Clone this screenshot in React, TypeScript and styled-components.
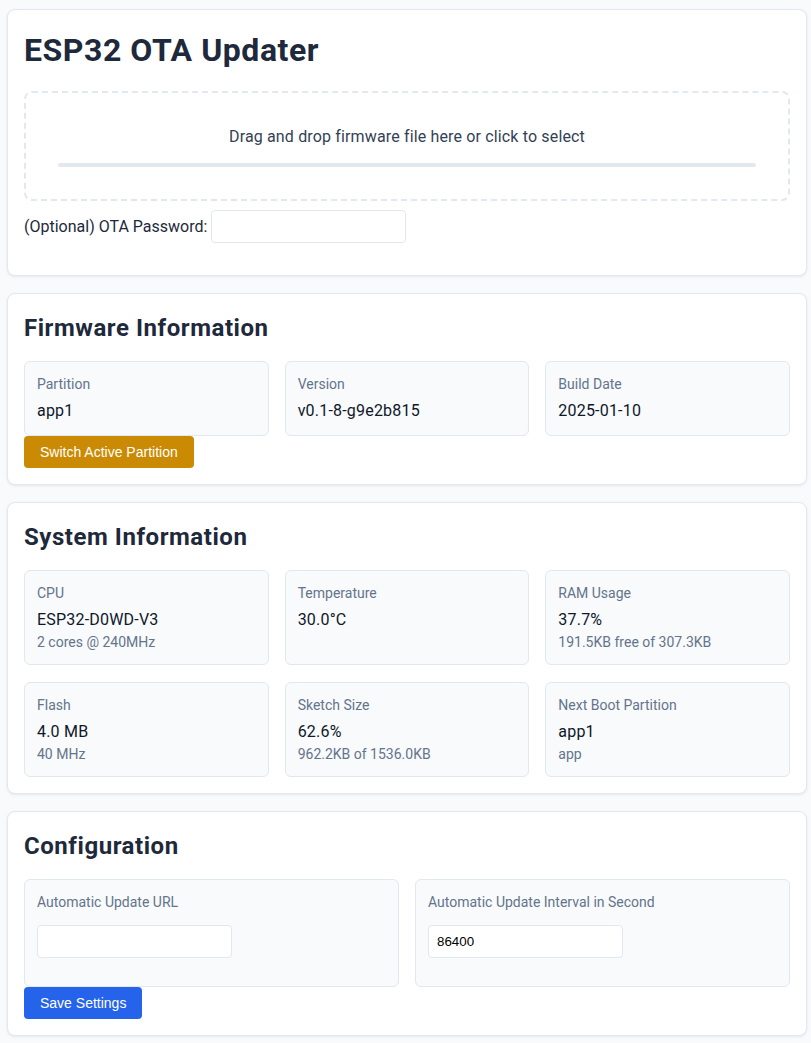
import React from "react";
import styled, { createGlobalStyle } from "styled-components";

const GlobalStyle = createGlobalStyle`
  html, body {
    margin: 0;
    padding: 0;
    background: #f8fafc;
  }
  body {
    font-family: Roboto, "Noto Sans", sans-serif;
    color: #1e293b;
  }
  * { box-sizing: border-box; }
`;

const Page = styled.main`
  padding: 9px 4px 16px 7px;
`;

const Card = styled.section`
  background: #ffffff;
  border: 1px solid #e2e8f0;
  border-radius: 8px;
  box-shadow: 0 1px 3px rgba(15, 23, 42, 0.08);
  padding: 16px;
  margin-bottom: 17px;
`;

const Title = styled.h1`
  margin: 0 0 17px;
  font-size: 32px;
  line-height: 48px;
  font-weight: 700;
  letter-spacing: 0.55px;
  color: #1e293b;
`;

const SectionTitle = styled.h2`
  margin: 0 0 15px;
  font-size: 24px;
  line-height: 36px;
  font-weight: 700;
  letter-spacing: 0.55px;
  color: #1e293b;
`;

const DropZone = styled.div`
  border: 2px dashed #e2e8f0;
  border-radius: 8px;
  padding: 32px;
  text-align: center;
  cursor: pointer;
`;

const DropText = styled.div`
  font-size: 16px;
  line-height: 24px;
  letter-spacing: 0.15px;
  color: #334155;
`;

const Progress = styled.div`
  margin-top: 14px;
  height: 4px;
  border-radius: 2px;
  background: #e2e8f0;
`;

const PasswordRow = styled.div`
  display: flex;
  align-items: center;
  gap: 4px;
  margin: 9px 0 16px;
  font-size: 16px;
  color: #1e293b;
`;

const TextInput = styled.input`
  width: 195px;
  height: 33px;
  padding: 8px;
  border: 1px solid #e2e8f0;
  border-radius: 4px;
  background: #ffffff;
  font-family: "Liberation Sans", Arial, sans-serif;
  font-size: 13.33px;
  color: #000;
  outline: none;
`;

const Grid = styled.div<{ $cols: number }>`
  display: grid;
  grid-template-columns: repeat(${(p) => p.$cols}, 1fr);
  column-gap: 16px;
  row-gap: 17px;
`;

const InfoBox = styled.div`
  background: #f8fafc;
  border: 1px solid #e2e8f0;
  border-radius: 6px;
  padding: 12px;
`;

const InfoLabel = styled.div`
  font-size: 14px;
  line-height: 21px;
  color: #64748b;
`;

const InfoValue = styled.div`
  margin-top: 4px;
  font-size: 16px;
  line-height: 24px;
  font-weight: 400;
  letter-spacing: 0.2px;
  color: #0f172a;
`;

const InfoSub = styled.div`
  font-size: 14px;
  line-height: 20px;
  color: #64748b;
`;

const ConfigInput = styled(TextInput)`
  display: block;
  margin: 12px 0 16px;
  height: 33px;
`;

const ActionButton = styled.button<{ $tone: "warn" | "primary" }>`
  display: inline-block;
  padding: 8px 16px;
  border: none;
  border-radius: 4px;
  background: ${(p) => (p.$tone === "warn" ? "#ca8a04" : "#2563eb")};
  color: #ffffff;
  font-family: "Liberation Sans", Arial, sans-serif;
  font-size: 14px;
  line-height: 16px;
  cursor: pointer;
`;

type Info = { label: string; value: string; sub?: string };

const firmware: Info[] = [
  { label: "Partition", value: "app1" },
  { label: "Version", value: "v0.1-8-g9e2b815" },
  { label: "Build Date", value: "2025-01-10" },
];

const system: Info[] = [
  { label: "CPU", value: "ESP32-D0WD-V3", sub: "2 cores @ 240MHz" },
  { label: "Temperature", value: "30.0°C", sub: "\u00a0" },
  { label: "RAM Usage", value: "37.7%", sub: "191.5KB free of 307.3KB" },
  { label: "Flash", value: "4.0 MB", sub: "40 MHz" },
  { label: "Sketch Size", value: "62.6%", sub: "962.2KB of 1536.0KB" },
  { label: "Next Boot Partition", value: "app1", sub: "app" },
];

const InfoCard: React.FC<Info> = ({ label, value, sub }) => (
  <InfoBox>
    <InfoLabel>{label}</InfoLabel>
    <InfoValue>{value}</InfoValue>
    {sub !== undefined && <InfoSub>{sub}</InfoSub>}
  </InfoBox>
);

export default function App() {
  return (
    <>
      <GlobalStyle />
      <Page>
        <Card>
          <Title>ESP32 OTA Updater</Title>
          <DropZone>
            <DropText>Drag and drop firmware file here or click to select</DropText>
            <Progress />
          </DropZone>
          <PasswordRow>
            <span>(Optional) OTA Password:</span>
            <TextInput type="password" />
          </PasswordRow>
        </Card>

        <Card>
          <SectionTitle>Firmware Information</SectionTitle>
          <Grid $cols={3}>
            {firmware.map((f) => (
              <InfoCard key={f.label} {...f} />
            ))}
          </Grid>
          <ActionButton $tone="warn">Switch Active Partition</ActionButton>
        </Card>

        <Card>
          <SectionTitle>System Information</SectionTitle>
          <Grid $cols={3}>
            {system.map((s) => (
              <InfoCard key={s.label} {...s} />
            ))}
          </Grid>
        </Card>

        <Card>
          <SectionTitle>Configuration</SectionTitle>
          <Grid $cols={2}>
            <InfoBox>
              <InfoLabel>Automatic Update URL</InfoLabel>
              <ConfigInput type="text" />
            </InfoBox>
            <InfoBox>
              <InfoLabel>Automatic Update Interval in Second</InfoLabel>
              <ConfigInput type="number" defaultValue="86400" />
            </InfoBox>
          </Grid>
          <ActionButton $tone="primary">Save Settings</ActionButton>
        </Card>
      </Page>
    </>
  );
}
